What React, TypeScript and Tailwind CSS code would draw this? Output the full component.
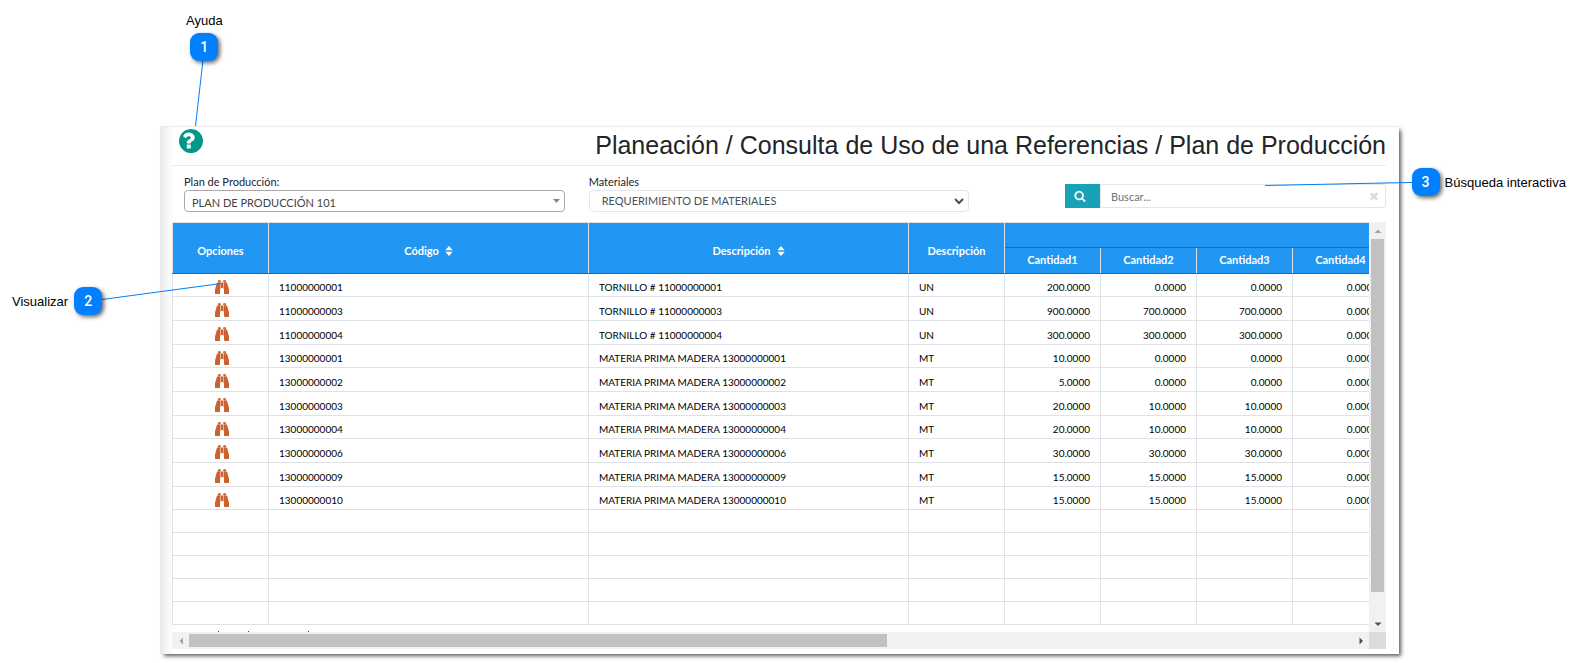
import type { ReactNode } from "react";

type Row = { code: string; name: string; unit: string; qty: string[] };

const rows: Row[] = [
  { code: "11000000001", name: "TORNILLO # 11000000001", unit: "UN", qty: ["200.0000", "0.0000", "0.0000", "0.0000"] },
  { code: "11000000003", name: "TORNILLO # 11000000003", unit: "UN", qty: ["900.0000", "700.0000", "700.0000", "0.0000"] },
  { code: "11000000004", name: "TORNILLO # 11000000004", unit: "UN", qty: ["300.0000", "300.0000", "300.0000", "0.0000"] },
  { code: "13000000001", name: "MATERIA PRIMA MADERA 13000000001", unit: "MT", qty: ["10.0000", "0.0000", "0.0000", "0.0000"] },
  { code: "13000000002", name: "MATERIA PRIMA MADERA 13000000002", unit: "MT", qty: ["5.0000", "0.0000", "0.0000", "0.0000"] },
  { code: "13000000003", name: "MATERIA PRIMA MADERA 13000000003", unit: "MT", qty: ["20.0000", "10.0000", "10.0000", "0.0000"] },
  { code: "13000000004", name: "MATERIA PRIMA MADERA 13000000004", unit: "MT", qty: ["20.0000", "10.0000", "10.0000", "0.0000"] },
  { code: "13000000006", name: "MATERIA PRIMA MADERA 13000000006", unit: "MT", qty: ["30.0000", "30.0000", "30.0000", "0.0000"] },
  { code: "13000000009", name: "MATERIA PRIMA MADERA 13000000009", unit: "MT", qty: ["15.0000", "15.0000", "15.0000", "0.0000"] },
  { code: "13000000010", name: "MATERIA PRIMA MADERA 13000000010", unit: "MT", qty: ["15.0000", "15.0000", "15.0000", "0.0000"] },
];

const quantities = ["Cantidad1", "Cantidad2", "Cantidad3", "Cantidad4"];
const emptyRows = [0, 1, 2, 3, 4];

const ICONS = {
  help: "M880 1344v-192q0-14-9-23t-23-9h-192q-14 0-23 9t-9 23v192q0 14 9 23t23 9h192q14 0 23-9t9-23zm256-672q0-88-55.5-163t-138.5-116-170-41q-243 0-371 213-15 24 8 42l132 100q7 6 19 6 16 0 25-12 53-68 86-92 34-24 86-24 48 0 85.5 26t37.5 59q0 38-20 61t-68 45q-63 28-115.5 86.5t-52.5 125.5v36q0 14 9 23t23 9h192q14 0 23-9t9-23q0-19 21.5-49.5t54.5-49.5q32-18 49-28.5t46-35 44.5-48 28-60.5 12.5-81zm528 224q0 209-103 385.5t-279.5 279.5-385.5 103-385.5-103-279.5-279.5-103-385.5 103-385.5 279.5-279.5 385.5-103 385.5 103 279.5 279.5 103 385.5z",
  binoculars: "M704 320v768q0 26-19 45t-45 19v576q0 26-19 45t-45 19h-512q-26 0-45-19t-19-45v-512l249-873q7-23 31-23h424zm320 0v704h-256v-704h256zm768 896v512q0 26-19 45t-45 19h-512q-26 0-45-19t-19-45v-576q-26 0-45-19t-19-45v-768h424q24 0 31 23zm-1056-1152v224h-352v-224q0-14 9-23t23-9h288q14 0 23 9t9 23zm672 0v224h-352v-224q0-14 9-23t23-9h288q14 0 23 9t9 23z",
  search: "M1216 832q0-185-131.5-316.5t-316.5-131.5-316.5 131.5-131.5 316.5 131.5 316.5 316.5 131.5 316.5-131.5 131.5-316.5zm512 832q0 52-38 90t-90 38q-54 0-90-38l-343-342q-179 124-399 124-143 0-273.5-55.5t-225-150-150-225-55.5-273.5 55.5-273.5 150-225 225-150 273.5-55.5 273.5 55.5 225 150 150 225 55.5 273.5q0 220-124 399l343 343q37 37 37 90z",
  times: "M1490 1322q0 40-28 68l-136 136q-28 28-68 28t-68-28l-294-294-294 294q-28 28-68 28t-68-28l-136-136q-28-28-28-68t28-68l294-294-294-294q-28-28-28-68t28-68l136-136q28-28 68-28t68 28l294 294 294-294q28-28 68-28t68 28l136 136q28 28 28 68t-28 68l-294 294 294 294q28 28 28 68z",
};

function Icon({ name, className }: { name: keyof typeof ICONS; className: string }) {
  return (
    <svg viewBox="0 0 1792 1792" fill="currentColor" aria-hidden="true" className={className}>
      <path d={ICONS[name]} />
    </svg>
  );
}

function SortIcon() {
  return (
    <svg viewBox="0 0 8 10" fill="currentColor" aria-hidden="true" className="h-[10px] w-2">
      <path d="M4 0L7.7 4.2H0.3zM4 10L0.3 5.8H7.7z" />
    </svg>
  );
}

function ScrollArrow({ label, d, className }: { label: string; d: string; className: string }) {
  return (
    <button type="button" aria-label={label} className={`flex size-[17px] shrink-0 items-center justify-center ${className}`}>
      <svg viewBox="0 0 8 8" fill="currentColor" className="size-2">
        <path d={d} />
      </svg>
    </button>
  );
}

function Badge({ children }: { children: ReactNode }) {
  return (
    <span className="flex size-7 shrink-0 items-center justify-center rounded-[9px] bg-[#0080ff] font-['Roboto',sans-serif] text-[14px] font-medium text-white shadow-[2px_2px_4px_rgba(0,0,0,0.6)]">
      {children}
    </span>
  );
}

function HeadCell({ children, sortable }: { children?: ReactNode; sortable?: boolean }) {
  return (
    <th rowSpan={2} className="border border-[#dee2e6] border-b-[#0b7a8f] p-0 pt-[6px] font-bold">
      <span className="flex items-center justify-center gap-[6px]">
        {children}
        {sortable && <SortIcon />}
      </span>
    </th>
  );
}

export default function App() {
  return (
    <div className="relative bg-white pt-[126px] pb-[9px] font-['Lato',sans-serif] text-[11px] leading-4 text-[#212529]">
      <main className="mr-[182px] ml-[160px] border-t border-[#ebebeb] bg-[linear-gradient(to_right,#e9e9e9_0,#f8f8f8_8px,#ffffff_14px)] pr-[13px] pb-[5px] pl-3 shadow-[3px_3px_4px_-1px_rgba(0,0,0,0.65)]">
        <header className="flex h-[39px] items-start justify-between border-b border-[#ebebeb]">
          <button type="button" aria-label="Ayuda" className="ml-[5px] text-[#009688]">
            <Icon name="help" className="size-7" />
          </button>
          <h1 className="pt-[2px] font-['Liberation_Sans',sans-serif] text-[25px] leading-8">
            Planeación / Consulta de Uso de una Referencias / Plan de Producción
          </h1>
        </header>

        <div className="grid grid-cols-3 pt-2 pb-[10px]">
          <div className="px-3">
            <label htmlFor="plan" className="block">Plan de Producción:</label>
            <div className="relative">
              <select id="plan" className="block h-[22px] w-full appearance-none rounded-[4px] border border-[#aaaaaa] bg-white px-[7px] pt-[3px] text-[11px] leading-4 text-[#444444]">
                <option>PLAN DE PRODUCCIÓN 101</option>
              </select>
              <svg viewBox="0 0 7 4" aria-hidden="true" className="pointer-events-none absolute top-[9px] right-[5px] h-1 w-[7px] fill-[#888888]">
                <path d="M0 0h7L3.500 4z" />
              </svg>
            </div>
          </div>
          <div className="px-3">
            <label htmlFor="materiales" className="block">Materiales</label>
            <div className="relative">
              <select id="materiales" className="block h-[22px] w-full appearance-none rounded-[4px] border border-[#e3e6e8] bg-white px-3 text-[11px] leading-4 text-[#495057]">
                <option>REQUERIMIENTO DE MATERIALES</option>
              </select>
              <svg viewBox="0 0 10 7" aria-hidden="true" className="pointer-events-none absolute top-2 right-[5px] h-[7px] w-[10px] fill-none stroke-[#495057] stroke-2">
                <path d="M1 1l4 4 4-4" />
              </svg>
            </div>
          </div>
          <form className="mt-[10px] ml-auto flex h-6 w-[321px] max-w-full self-start" onSubmit={(e) => e.preventDefault()}>
            <button type="submit" aria-label="Buscar" className="flex h-6 w-[35px] shrink-0 items-center justify-center bg-[#17a2b8] pr-1 text-white">
              <Icon name="search" className="size-3" />
            </button>
            <div className="relative flex-1">
              <input aria-label="Buscar" placeholder="Buscar..." className="block h-6 w-full rounded-r-[4px] border border-[#e3e6e8] px-[10px] text-[11px] leading-4 outline-none placeholder:text-[#6c757d]" />
              <button type="button" aria-label="Limpiar" className="absolute top-[6px] right-[6px] text-[#d5dddd]">
                <Icon name="times" className="size-3" />
              </button>
            </div>
          </form>
        </div>

        <section>
          <div className="flex">
            <div className="h-[410px] min-w-0 flex-1 overflow-hidden">
              <table className="w-[1217px] table-fixed border-collapse text-[10px] leading-[14px] text-black">
                <colgroup>
                  <col className="w-24" />
                  <col className="w-80" />
                  <col className="w-80" />
                  <col className="w-24" />
                  {quantities.map((q) => <col key={q} className="w-24" />)}
                </colgroup>
                <thead className="bg-[#2196f3] text-[11px] leading-4 text-white">
                  <tr className="h-[25px]">
                    <HeadCell>Opciones</HeadCell>
                    <HeadCell sortable>Código</HeadCell>
                    <HeadCell sortable>Descripción</HeadCell>
                    <HeadCell>Descripción</HeadCell>
                    <th colSpan={4} className="border border-[#dee2e6] border-b-[#0b7a8f] p-0" />
                  </tr>
                  <tr className="h-[26px]">
                    {quantities.map((q) => (
                      <th key={q} className="border border-[#dee2e6] border-b-[#0b7a8f] p-0 pb-px font-bold">{q}</th>
                    ))}
                  </tr>
                </thead>
                <tbody>
                  {rows.map((r) => (
                    <tr key={r.code} className="h-6 nth-[3n+1]:h-[23px]">
                      <td className="border border-[#dee2e6] p-0">
                        <button type="button" aria-label={`Visualizar ${r.code}`} className="mx-auto mt-[3px] block pl-[2px] text-[#cb622f]">
                          <Icon name="binoculars" className="size-[14px]" />
                        </button>
                      </td>
                      <td className="border border-[#dee2e6] px-[10px] pt-1 pb-0">{r.code}</td>
                      <td className="border border-[#dee2e6] px-[10px] pt-1 pb-0">{r.name}</td>
                      <td className="border border-[#dee2e6] px-[10px] pt-1 pb-0">{r.unit}</td>
                      {r.qty.map((v, i) => (
                        <td key={quantities[i]} className="border border-[#dee2e6] px-[10px] pt-1 pb-0 text-right">{v}</td>
                      ))}
                    </tr>
                  ))}
                  {emptyRows.map((n) => (
                    <tr key={n} className="h-[23px]">
                      {["op", "cod", "desc", "un", ...quantities].map((c) => (
                        <td key={c} className="border border-[#dee2e6] p-0" />
                      ))}
                    </tr>
                  ))}
                </tbody>
              </table>
              <svg viewBox="0 0 100 1" aria-hidden="true" className="mt-[6px] ml-[45px] h-px w-[100px] fill-[#46308c]">
                <path d="M1 0h1v1H1zM31 0h1v1H31zM91 0h1v1H91z" />
              </svg>
            </div>
            <div className="flex w-[17px] shrink-0 flex-col bg-[#f1f1f1]">
              <ScrollArrow label="Subir" d="M0.5 6L4 2.5 7.5 6z" className="text-[#a3a3a3]" />
              <div className="flex-1 px-[2px]">
                <div className="h-[94%] bg-[#c1c1c1]" />
              </div>
              <ScrollArrow label="Bajar" d="M0.5 2.5L4 6 7.5 2.5z" className="text-[#505050]" />
            </div>
          </div>
          <div className="flex h-[17px] bg-[#f1f1f1]">
            <ScrollArrow label="Izquierda" d="M6 0.5L2.5 4 6 7.5z" className="text-[#a3a3a3]" />
            <div className="flex-1 py-[2px]">
              <div className="h-full w-3/5 bg-[#c1c1c1]" />
            </div>
            <ScrollArrow label="Derecha" d="M2.5 0.5L6 4 2.5 7.5z" className="text-[#505050]" />
            <div className="size-[17px] bg-[#dcdcdc]" />
          </div>
        </section>
      </main>

      <aside className="font-['Liberation_Sans',sans-serif] text-[13px] leading-4 text-black">
        <svg viewBox="0 0 240 320" aria-hidden="true" className="pointer-events-none absolute top-0 left-0 h-80 w-60 stroke-[#0080ff]">
          <path d="M203 60L195.500 126M102 299.500L221 283.500" />
        </svg>
        <svg viewBox="0 0 150 10" aria-hidden="true" className="pointer-events-none absolute top-[180px] right-[167px] h-[10px] w-[150px] stroke-[#0080ff]">
          <path d="M1 5.500L120 3 149 2.500" />
        </svg>
        <div className="absolute top-[13px] left-[186px] flex flex-col items-center gap-1">
          <span>Ayuda</span>
          <Badge>1</Badge>
        </div>
        <div className="absolute top-[287px] left-3 flex items-center gap-[6px]">
          <span className="pt-px">Visualizar</span>
          <Badge>2</Badge>
        </div>
        <div className="absolute top-[168px] right-[15px] flex items-center gap-[5px]">
          <Badge>3</Badge>
          <span className="pt-px">Búsqueda interactiva</span>
        </div>
      </aside>
    </div>
  );
}
